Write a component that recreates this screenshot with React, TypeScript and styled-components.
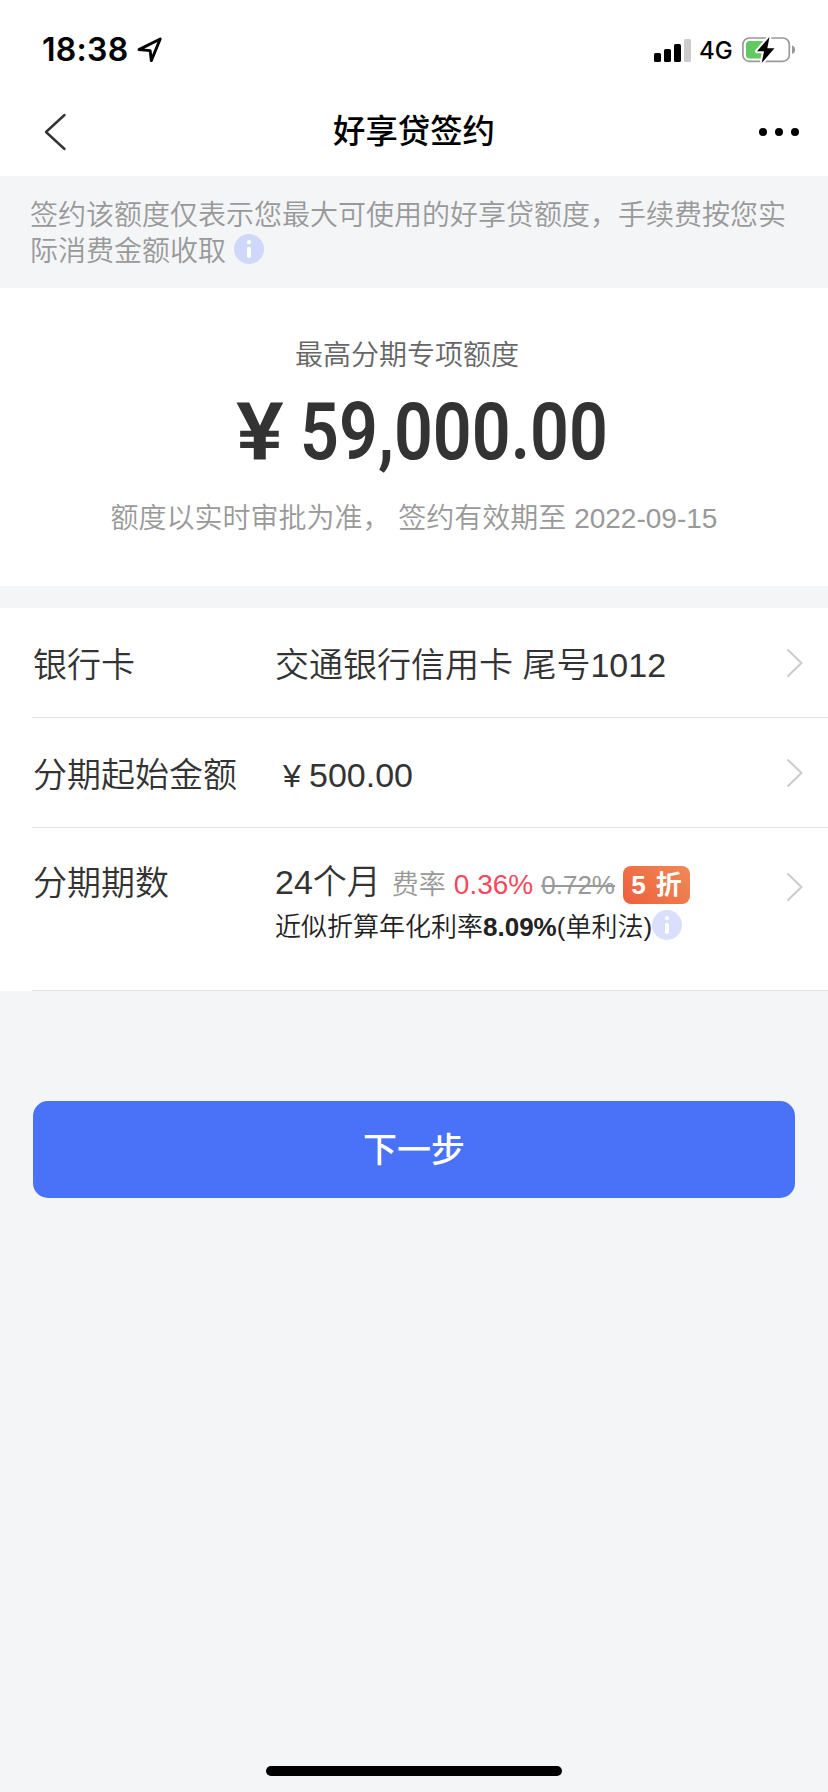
import React from "react";
import styled, { createGlobalStyle } from "styled-components";

const GlobalStyle = createGlobalStyle`
  * { box-sizing: border-box; }
  body {
    margin: 0;
    background: #f3f5f7;
    font-family: "Liberation Sans", "Noto Sans CJK SC", sans-serif;
    color: #333;
  }
`;

const Page = styled.div`
  width: 828px;
  height: 1792px;
  display: flex;
  flex-direction: column;
  overflow: hidden;
`;

const StatusBar = styled.header`
  height: 88px;
  padding: 12px 32px 0 42px;
  display: flex;
  align-items: center;
  justify-content: space-between;
  background: #fff;
  color: #000;
  font-family: Inter, sans-serif;
`;

const StatusGroup = styled.div`
  display: flex;
  align-items: center;
`;

const Time = styled.span`
  width: 95px;
  font-size: 32px;
  line-height: 40px;
  font-weight: 600;
  letter-spacing: 0.3px;
  white-space: nowrap;
`;

const Network = styled.span`
  margin: 2px 10px 0 8px;
  width: 33px;
  font-size: 24px;
  line-height: 30px;
  font-weight: 500;
  white-space: nowrap;
`;

const NavBar = styled.nav`
  height: 88px;
  padding: 0 29px 0 44px;
  display: grid;
  grid-template-columns: 100px 1fr 100px;
  align-items: center;
  background: #fff;
`;

const NavTitle = styled.h1`
  margin: 0;
  padding-right: 15px;
  font-size: 32.4px;
  line-height: 44px;
  font-weight: 500;
  text-align: center;
  color: #000;
`;

const NavSide = styled.div<{ $end?: boolean }>`
  display: flex;
  justify-content: ${(p) => (p.$end ? "flex-end" : "flex-start")};
`;

const Notice = styled.p`
  margin: 0;
  height: 112px;
  padding: 22px 30px 0;
  font-size: 28px;
  line-height: 36px;
  font-weight: 350;
  color: #999;
`;

const InfoSvg = styled.svg<{ $gap: number; $drop: number }>`
  width: 30px;
  height: 30px;
  margin-left: ${(p) => p.$gap}px;
  vertical-align: -${(p) => p.$drop}px;
`;

const Quota = styled.section`
  height: 298px;
  padding-top: 50px;
  display: flex;
  flex-direction: column;
  align-items: center;
  background: #fff;
`;

const QuotaLabel = styled.div`
  padding-right: 14px;
  font-size: 28px;
  line-height: 36px;
  font-weight: 350;
  color: #666;
`;

const Amount = styled.div`
  display: flex;
  width: 370px;
  height: 80px;
  margin: 18px 0 0 14px;
  font-family: Roboto, sans-serif;
  font-size: 80px;
  line-height: 80px;
  font-weight: 600;
  color: #333;
  white-space: nowrap;
`;

const Currency = styled.span`
  flex: 0 0 64px;
  transform: scaleX(1.12);
  transform-origin: left center;
`;

const Digits = styled.span`
  flex: none;
  transform: scaleX(0.852);
  transform-origin: left center;
`;

const QuotaHint = styled.div`
  margin-top: 29px;
  font-size: 28px;
  line-height: 36px;
  font-weight: 350;
  color: #999;
  white-space: pre;
`;

const List = styled.section`
  margin-top: 22px;
  background: #fff;
`;

const Row = styled.div<{ $height: number; $top: number }>`
  height: ${(p) => p.$height}px;
  margin-left: 32px;
  padding: ${(p) => p.$top}px 24px 0 1px;
  display: grid;
  grid-template-columns: 242px 1fr 18px;
  align-items: start;
  border-bottom: 1px solid #e2e3e5;
  font-size: 34px;
  line-height: 44px;
  font-weight: 350;
  white-space: nowrap;
`;

const Label = styled.div`
  font-weight: 350;
`;

const Value = styled.div`
  display: flex;
  flex-direction: column;
`;

const ValueLine = styled.div`
  display: flex;
  align-items: baseline;
  height: 44px;
`;

const TermLine = styled(ValueLine)`
  height: 45px;
  margin-top: -1px;
`;

const Yen = styled.span`
  width: 34px;
  padding-left: 8px;
  font-size: 32px;
`;

const RateLabel = styled.span`
  margin-left: 11px;
  font-size: 27px;
  color: #999;
`;

const Rate = styled.span`
  margin-left: 8px;
  font-size: 28px;
  color: #f8485e;
`;

const OldRate = styled.del`
  margin-left: 8px;
  font-size: 26px;
  color: #999;
`;

const Discount = styled.span`
  width: 67px;
  height: 38px;
  margin-left: 8px;
  border-radius: 8px;
  background: linear-gradient(45deg, #ee5f3c, #ee8a58);
  color: #fff;
  font-size: 26px;
  line-height: 38px;
  font-weight: 600;
  word-spacing: 3px;
  text-align: center;
`;

const Annual = styled.div`
  font-size: 26px;
  line-height: 36px;
  margin-top: 4px;
  color: #222;
`;

const ArrowSvg = styled.svg<{ $top: number }>`
  margin-top: ${(p) => p.$top}px;
`;

const NextButton = styled.button`
  height: 97px;
  margin: 110px 33px 0;
  padding: 0 0 4px;
  border: 0;
  border-radius: 15px;
  background: #4a72f8;
  color: #fff;
  font-family: "Noto Sans CJK SC", sans-serif;
  font-size: 34px;
  font-weight: 500;
`;

const HomeIndicator = styled.div`
  width: 296px;
  height: 10px;
  margin: auto auto 16px;
  border-radius: 5px;
  background: #000;
`;

const InfoIcon = ({ gap, drop, color }: { gap: number; drop: number; color: string }) => (
  <InfoSvg $gap={gap} $drop={drop} viewBox="0 0 30 30">
    <circle cx="15" cy="15" r="15" fill={color} />
    <circle cx="15" cy="8.2" r="2.1" fill="#fff" />
    <path d="M15 14.8v7.2" stroke="#fff" strokeWidth="4" strokeLinecap="round" />
  </InfoSvg>
);

const Arrow = ({ top }: { top: number }) => (
  <ArrowSvg $top={top} width="18" height="30" viewBox="0 0 18 30" fill="none">
    <path d="M1.5 1.5 15.5 15 1.5 28.5" stroke="#ccc" strokeWidth="2" />
  </ArrowSvg>
);

const LocationIcon = () => (
  <svg width="26" height="26" viewBox="0 0 26 26" fill="none">
    <path d="M2 12.6 23.2 2 14.3 23.6 13.2 13.6Z" stroke="#000" strokeWidth="2.9" strokeLinejoin="round" />
  </svg>
);

const SignalIcon = () => (
  <svg width="37" height="23" viewBox="0 0 37 23">
    <rect x="0" y="14" width="7" height="9" rx="1.6" />
    <rect x="10" y="10" width="7" height="13" rx="1.6" />
    <rect x="20" y="5" width="7" height="18" rx="1.6" />
    <rect x="30" y="0" width="7" height="23" rx="1.6" fill="#ccc" />
  </svg>
);

const BatteryIcon = () => (
  <svg width="54" height="28" viewBox="0 0 54 28">
    <rect x="0.9" y="2" width="46.4" height="23.4" rx="6.5" fill="#fff" stroke="#999" strokeWidth="1.7" />
    <rect x="4" y="5" width="21" height="17.5" rx="3.5" fill="#62c860" />
    <path d="M50 9.5c1.9.6 3.1 2 3.1 4.2s-1.2 3.6-3.1 4.2Z" fill="#999" />
    <path d="M27.5 1 15 15.2h7L19.7 27 32.5 12.3h-7.2Z" fill="#000" stroke="#fff" strokeWidth="4" strokeLinejoin="round" />
    <path d="M27.5 1 15 15.2h7L19.7 27 32.5 12.3h-7.2Z" fill="#000" />
  </svg>
);

export default function App() {
  return (
    <>
      <GlobalStyle />
      <Page>
        <StatusBar>
          <StatusGroup>
            <Time>18:38</Time>
            <LocationIcon />
          </StatusGroup>
          <StatusGroup>
            <SignalIcon />
            <Network>4G</Network>
            <BatteryIcon />
          </StatusGroup>
        </StatusBar>
        <NavBar>
          <NavSide>
            <svg width="24" height="38" viewBox="0 0 24 38" fill="none">
              <path d="M20.5 2 2 19l18.5 17" stroke="#333" strokeWidth="2.4" strokeLinecap="round" strokeLinejoin="round" />
            </svg>
          </NavSide>
          <NavTitle>好享贷签约</NavTitle>
          <NavSide $end>
            <svg width="40" height="8" viewBox="0 0 40 8">
              <circle cx="4" cy="4" r="4" />
              <circle cx="20" cy="4" r="4" />
              <circle cx="36" cy="4" r="4" />
            </svg>
          </NavSide>
        </NavBar>
        <Notice>
          签约该额度仅表示您最大可使用的好享贷额度，手续费按您实际消费金额收取
          <InfoIcon gap={8} drop={3} color="#cfd7fa" />
        </Notice>
        <Quota>
          <QuotaLabel>最高分期专项额度</QuotaLabel>
          <Amount>
            <Currency>¥</Currency>
            <Digits>59,000.00</Digits>
          </Amount>
          <QuotaHint>额度以实时审批为准， 签约有效期至 2022-09-15</QuotaHint>
        </Quota>
        <List>
          <Row $height={110} $top={35}>
            <Label>银行卡</Label>
            <Value>交通银行信用卡 尾号1012</Value>
            <Arrow top={5} />
          </Row>
          <Row $height={110} $top={35}>
            <Label>分期起始金额</Label>
            <ValueLine>
              <Yen>¥</Yen>500.00
            </ValueLine>
            <Arrow top={5} />
          </Row>
          <Row $height={163} $top={33}>
            <Label>分期期数</Label>
            <Value>
              <TermLine>
                24个月
                <RateLabel>费率</RateLabel>
                <Rate>0.36%</Rate>
                <OldRate>0.72%</OldRate>
                <Discount>5 折</Discount>
              </TermLine>
              <Annual>
                近似折算年化利率<b>8.09%</b>(单利法)
                <InfoIcon gap={0} drop={4} color="#d9dffc" />
              </Annual>
            </Value>
            <Arrow top={11} />
          </Row>
        </List>
        <NextButton>下一步</NextButton>
        <HomeIndicator />
      </Page>
    </>
  );
}
